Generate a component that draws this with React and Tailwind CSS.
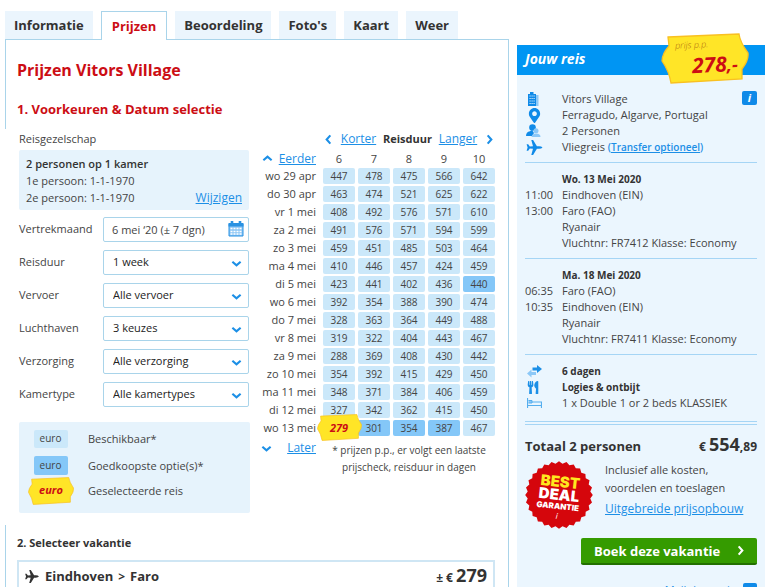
import { Fragment } from 'react';
import { FaMapMarkerAlt, FaUtensils } from 'react-icons/fa';

const TABS = ['Informatie', 'Prijzen', 'Beoordeling', "Foto's", 'Kaart', 'Weer'];

const DURATIONS = [6, 7, 8, 9, 10];

const PRICES = [
  ['wo 29 apr', [447, 478, 475, 566, 642]],
  ['do 30 apr', [463, 474, 521, 625, 622]],
  ['vr 1 mei', [408, 492, 576, 571, 610]],
  ['za 2 mei', [491, 576, 571, 594, 599]],
  ['zo 3 mei', [459, 451, 485, 503, 464]],
  ['ma 4 mei', [410, 446, 457, 424, 459]],
  ['di 5 mei', [423, 441, 402, 436, 440]],
  ['wo 6 mei', [392, 354, 388, 390, 474]],
  ['do 7 mei', [328, 363, 364, 449, 488]],
  ['vr 8 mei', [319, 322, 404, 443, 467]],
  ['za 9 mei', [288, 369, 408, 430, 442]],
  ['zo 10 mei', [354, 392, 415, 429, 450]],
  ['ma 11 mei', [348, 371, 384, 406, 459]],
  ['di 12 mei', [327, 342, 362, 415, 450]],
  ['wo 13 mei', [279, 301, 354, 387, 467]],
];

// cheapest option per duration, as "day-duration"
const CHEAPEST = ['di 5 mei-10', 'wo 13 mei-7', 'wo 13 mei-8', 'wo 13 mei-9'];
const SELECTED = 'wo 13 mei-6';

const FILTERS = [
  { id: 'duur', label: 'Reisduur', value: '1 week' },
  { id: 'vervoer', label: 'Vervoer', value: 'Alle vervoer' },
  { id: 'luchthaven', label: 'Luchthaven', value: '3 keuzes' },
  { id: 'verzorging', label: 'Verzorging', value: 'Alle verzorging' },
  { id: 'kamertype', label: 'Kamertype', value: 'Alle kamertypes' },
];

const FLIGHTS = [
  {
    date: 'Wo. 13 Mei 2020',
    stops: [['11:00', 'Eindhoven (EIN)'], ['13:00', 'Faro (FAO)']],
    nr: 'Vluchtnr: FR7412 Klasse: Economy',
  },
  {
    date: 'Ma. 18 Mei 2020',
    stops: [['06:35', 'Faro (FAO)'], ['10:35', 'Eindhoven (EIN)']],
    nr: 'Vluchtnr: FR7411 Klasse: Economy',
  },
];

function Chevron({ dir = 'down' }) {
  const paths = {
    down: 'M1.5 4 L6 8 L10.5 4',
    up: 'M1.5 8 L6 4 L10.5 8',
    left: 'M8 1.5 L4 6 L8 10.5',
    right: 'M4 1.5 L8 6 L4 10.5',
  };
  return (
    <svg viewBox="0 0 12 12" className="w-[11px] h-[11px]" fill="none" stroke="currentColor" strokeWidth="2.3">
      <path d={paths[dir]} />
    </svg>
  );
}

function TagShape() {
  return (
    <svg viewBox="0 0 88 51" preserveAspectRatio="none" className="absolute inset-0 w-full h-full">
      <path
        d="M7 4 L78 1 Q79 9 87 20 Q88 27 81 36 L81 46 L10 50 Q8 38 1 28 Q1 21 8 13 Z"
        fill="#ffe527"
        stroke="#f9c021"
        strokeWidth="1.3"
      />
    </svg>
  );
}

function CalendarIcon() {
  return (
    <svg viewBox="0 0 16 16" className="w-4 h-4">
      <path d="M1 3 H15 V15 H1 Z" fill="#8cc6f5" stroke="#2a92e2" />
      <path d="M0.5 2 H15.5 V5.5 H0.5 Z" fill="#2a92e2" />
      <path d="M4 0 V4 M12 0 V4" stroke="#2a92e2" strokeWidth="2.6" />
      <path d="M2.500 7.500 H13.500 M2.500 10.500 H13.500 M2.500 13 H13.500" stroke="#fff" strokeWidth="1.7" strokeDasharray="2 1" />
    </svg>
  );
}

function HotelIcon() {
  return (
    <svg viewBox="0 0 12 14" className="w-3 h-[14px]">
      <path d="M9 3 H11.500 V14 H9 Z" fill="#8cc8f7" />
      <path d="M1 2 H3 V0 H6.500 V2 H9 V14 H1 Z" fill="#0f8ae8" />
      <path d="M2.500 4 H8 M2.500 6.500 H8 M2.500 9 H8 M2.500 11.500 H8" stroke="#d5ecfd" strokeDasharray="1.200 0.800" />
    </svg>
  );
}

function PeopleIcon() {
  return (
    <svg viewBox="0 0 15 14" className="w-[15px] h-[14px]">
      <circle cx="6.5" cy="3.5" r="3.3" fill="#0f8ae8" />
      <path d="M0 12 Q0 8 4 7.300 L6 6 L8 9 L6 12 Z" fill="#0f8ae8" />
      <circle cx="10" cy="6.800" r="2.500" fill="#8cc8f7" />
      <path d="M5.500 13 Q6 9.500 10 9.500 Q14.500 9.500 14.500 13 Z" fill="#8cc8f7" />
    </svg>
  );
}

function ArrowsIcon() {
  return (
    <svg viewBox="0 0 15 13" className="w-[15px] h-[13px]">
      <path d="M0 8.500 L4.500 4.500 V7 H9 V10 H4.500 V12.500 Z" fill="#8cc8f7" />
      <path d="M15 4 L10 0 V2.500 H5.500 V5.500 H10 V8 Z" fill="#1c8fe6" />
    </svg>
  );
}

function BedIcon() {
  return (
    <svg viewBox="0 0 15 12" className="w-[15px] h-[12px]" fill="none" stroke="#55aeee">
      <path d="M0.500 1 V11 M0.500 8.500 H14.500 M14.500 11 V5 H4.500" strokeWidth="1.200" />
      <path d="M1.500 3.500 H5 V6 H1.500" fill="#8cc8f7" />
    </svg>
  );
}

function PlaneIcon({ className }) {
  return (
    <svg viewBox="0 0 16 15" className={className} fill="currentColor">
      <path d="M16 7.500 Q15 6.200 12.500 6.200 L10.400 6.200 L6.600 0 L4.800 0 L6.500 6.200 L3.300 6.400 L1.700 4.300 L0.100 4.300 L1.100 7.500 L0.100 10.700 L1.700 10.700 L3.300 8.600 L6.500 8.800 L4.800 15 L6.600 15 L10.400 8.800 L12.500 8.800 Q15 8.800 16 7.500 Z" />
    </svg>
  );
}

function DealBadge() {
  const points = Array.from({ length: 56 }, (_, i) => {
    const r = i % 2 ? 31.5 : 33.8;
    const a = (i / 56) * Math.PI * 2;
    return `${(34 + r * Math.cos(a)).toFixed(1)},${(34 + r * Math.sin(a)).toFixed(1)}`;
  }).join(' ');
  return (
    <div className="relative w-[68px] h-[68px] shrink-0">
      <svg viewBox="0 0 68 68" className="absolute inset-0">
        <polygon points={points} fill="#d5060c" />
      </svg>
      <div className="relative h-full pt-[14px] rotate-6 flex flex-col items-center text-white font-black font-['Inter',sans-serif]">
        <span className="text-[15px] leading-[13px] text-[#ffe81f]">BEST</span>
        <span className="text-[15px] leading-[13px]">DEAL</span>
        <span className="text-[8px] leading-[10px]">GARANTIE</span>
        <span className="text-[8px] leading-[10px] font-normal italic">i</span>
      </div>
    </div>
  );
}

function Tabs() {
  return (
    <nav className="flex gap-2 -mb-px relative">
      {TABS.map((tab) => (
        <a
          key={tab}
          href="#"
          className={
            tab === 'Prijzen'
              ? 'h-[29px] px-[10px] leading-[29px] text-[13px] font-bold text-[#cc0d14] bg-white border border-b-0 border-[#a9d4ea]'
              : 'h-[28px] px-[9px] leading-[28px] text-[13px] font-bold text-[#333] bg-[#ebf5fd]'
          }
        >
          {tab}
        </a>
      ))}
    </nav>
  );
}

function Preferences() {
  return (
    <div className="w-[230px] shrink-0 text-[11px]">
      <p className="leading-5">Reisgezelschap</p>
      <div className="mt-px h-[60px] px-[7px] pt-[5px] leading-[17px] rounded-xs bg-[#e6f3fc]">
        <p className="font-semibold text-[#333]">2 personen op 1 kamer</p>
        <p>1e persoon: 1-1-1970</p>
        <div className="flex justify-between">
          <p>2e persoon: 1-1-1970</p>
          <a href="#" className="text-[12px] text-[#1c8fe6] underline">Wijzigen</a>
        </div>
      </div>
      <form className="mt-[7px] flex flex-col gap-2">
        <div className="flex items-center justify-between h-[25px]">
          <label htmlFor="maand">Vertrekmaand</label>
          <div className="relative w-[146px]">
            <input
              id="maand"
              readOnly
              value="6 mei ‘20 (± 7 dgn)"
              className="w-full h-[25px] px-2 border border-[#a9d4ea] rounded-xs bg-white"
            />
            <span className="absolute right-[5px] top-1">
              <CalendarIcon />
            </span>
          </div>
        </div>
        {FILTERS.map((f) => (
          <div key={f.id} className="flex items-center justify-between h-[25px]">
            <label htmlFor={f.id}>{f.label}</label>
            <div className="relative w-[146px]">
              <select
                id={f.id}
                className="w-full h-[25px] px-[9px] border border-[#a9d4ea] rounded-xs bg-white appearance-none text-[#222]"
              >
                <option>{f.value}</option>
              </select>
              <span className="absolute right-[7px] top-2 text-[#1c8fe6] pointer-events-none">
                <Chevron />
              </span>
            </div>
          </div>
        ))}
      </form>
      <div className="mt-[15px] w-[231px] h-[91px] pt-2 pl-[9px] rounded-xs bg-[#e6f3fc] grid grid-cols-[45px_1fr] gap-x-[15px] items-center content-start">
        <span className="justify-self-center w-[34px] h-[18px] leading-[17px] text-[10px] text-center rounded-xs bg-[#cbe8fa]">
          euro
        </span>
        <span className="leading-[18px]">Beschikbaar*</span>
        <span className="mt-2 justify-self-center w-[34px] h-[19px] leading-[18px] text-[10px] text-center rounded-xs bg-[#84c7f8]">
          euro
        </span>
        <span className="mt-2 leading-[18px]">Goedkoopste optie(s)*</span>
        <span className="relative mt-[2px] w-[46px] h-[28px] leading-[25px] text-[11px] text-center font-bold italic text-[#cc0d14]">
          <TagShape />
          <span className="relative">euro</span>
        </span>
        <span className="mt-[2px]">Geselecteerde reis</span>
      </div>
    </div>
  );
}

function PriceCell({ day, duration, price }) {
  const key = `${day}-${duration}`;
  if (key === SELECTED) {
    return (
      <td className="p-0 h-4">
        <button className="relative block w-8 h-4 text-[11px] leading-4 font-bold italic text-[#cc0d14]">
          <span className="absolute -left-[6px] -top-[6px] w-[45px] h-[27px]">
            <TagShape />
          </span>
          <span className="relative">{price}</span>
        </button>
      </td>
    );
  }
  return (
    <td className="p-0 h-4">
      <button
        className={
          CHEAPEST.includes(key)
            ? 'block w-8 h-4 leading-[15px] text-[10px] rounded-xs bg-[#84c7f8]'
            : 'block w-8 h-4 leading-[15px] text-[10px] rounded-xs bg-[#cbe8fa]'
        }
      >
        {price}
      </button>
    </td>
  );
}

function PriceTable() {
  return (
    <div className="flex flex-col items-end text-[11px]">
      <div className="w-[172px] flex items-center justify-between leading-5">
        <a href="#" aria-label="Korter" className="text-[#1c8fe6]"><Chevron dir="left" /></a>
        <a href="#" className="text-[12px] text-[#1c8fe6] underline">Korter</a>
        <span className="font-bold text-[#333]">Reisduur</span>
        <a href="#" className="text-[12px] text-[#1c8fe6] underline">Langer</a>
        <a href="#" aria-label="Langer" className="text-[#1c8fe6]"><Chevron dir="right" /></a>
      </div>
      <table className="border-separate border-spacing-x-[3px] border-spacing-y-[2px] -mr-[3px]">
        <thead>
          <tr className="h-[15px] leading-[15px]">
            <th className="p-0 pr-1 font-normal text-[#1c8fe6]">
              <span className="flex items-center justify-between">
                <Chevron dir="up" />
                <a href="#" className="text-[12px] underline">Eerder</a>
              </span>
            </th>
            {DURATIONS.map((d) => (
              <th key={d} className="p-0 w-8 font-normal">{d}</th>
            ))}
          </tr>
        </thead>
        <tbody>
          {PRICES.map(([day, prices]) => (
            <tr key={day}>
              <th className="p-0 pr-1 h-4 leading-4 font-normal text-right whitespace-nowrap">{day}</th>
              {prices.map((price, i) => (
                <PriceCell key={i} day={day} duration={DURATIONS[i]} price={price} />
              ))}
            </tr>
          ))}
        </tbody>
      </table>
      <div className="flex justify-between w-[234px]">
        <div className="w-[55px] h-5 flex items-center justify-between text-[#1c8fe6]">
          <Chevron />
          <a href="#" className="text-[12px] underline">Later</a>
        </div>
        <p className="w-[172px] pt-1 text-[10px] leading-[17px] text-center whitespace-nowrap">
          * prijzen p.p., er volgt een laatste
          <br />
          prijscheck, reisduur in dagen
        </p>
      </div>
    </div>
  );
}

function Sidebar() {
  return (
    <aside className="w-[248px] shrink-0 mt-[34px] bg-[#ebf6fe] text-[11px] leading-4">
      <header className="relative h-[30px] pl-2 bg-[#0095f3]">
        <h2 className="text-[14px] leading-[28px] font-bold italic text-white">Jouw reis</h2>
        <div className="absolute right-4 -top-[12px] w-[88px] h-[51px]">
          <TagShape />
          <p className="absolute left-[14px] top-1 text-[9px] font-light italic text-[#b06a10] -rotate-3">prijs p.p.</p>
          <p className="absolute right-[11px] top-[17px] text-[21px] leading-7 font-bold italic text-[#cc0d14] -rotate-3">
            278<span className="text-[18px]">,-</span>
          </p>
        </div>
      </header>
      <div className="px-2 pt-4">
        <div className="relative grid grid-cols-[37px_1fr] items-center pb-[7px] border-b border-[#a5d5f5]">
          <span className="text-[#0f8ae8] pl-[2px]"><HotelIcon /></span>
          <span>Vitors Village</span>
          <span className="text-[#0f8ae8] pl-[2px]"><FaMapMarkerAlt className="w-[15px] h-[15px]" /></span>
          <span>Ferragudo, Algarve, Portugal</span>
          <span className="pl-px"><PeopleIcon /></span>
          <span>2 Personen</span>
          <span className="text-[#0f8ae8] pl-px"><PlaneIcon className="w-[17px] h-[15px]" /></span>
          <span>
            Vliegreis <a href="#" className="text-[10px] font-semibold text-[#1c8fe6]">(<span className="underline">Transfer optioneel</span>)</a>
          </span>
          <button
            aria-label="Info"
            className="absolute right-0 top-0 w-[15px] h-[14px] rounded-xs bg-[#0f8ae8] text-white text-[11px] leading-[14px] font-bold italic"
          >
            i
          </button>
        </div>
        {FLIGHTS.map((f) => (
          <div key={f.date} className="grid grid-cols-[37px_1fr] pt-2 pb-[7px] border-b border-[#a5d5f5]">
            <p className="col-start-2 text-[10px] font-bold text-[#333]">{f.date}</p>
            {f.stops.map(([time, place]) => (
              <Fragment key={time}>
                <span>{time}</span>
                <span>{place}</span>
              </Fragment>
            ))}
            <p className="col-start-2">Ryanair</p>
            <p className="col-start-2 whitespace-nowrap">{f.nr}</p>
          </div>
        ))}
        <div className="grid grid-cols-[37px_1fr] items-center pt-2 pb-[10px] border-b border-[#a5d5f5]">
          <span className="pl-[2px]"><ArrowsIcon /></span>
          <span className="text-[10px] font-bold text-[#333]">6 dagen</span>
          <span className="pl-[2px] text-[#1c8fe6]"><FaUtensils className="w-3 h-[13px]" /></span>
          <span className="text-[10px] font-bold text-[#333]">Logies &amp; ontbijt</span>
          <span className="pl-[2px]"><BedIcon /></span>
          <span>1 x Double 1 or 2 beds KLASSIEK</span>
        </div>
        <div className="mt-[2px] pt-[7px] border-t border-[#a5d5f5] flex items-baseline justify-between font-bold text-[#333]">
          <span className="text-[13px]">Totaal 2 personen</span>
          <span className="text-[12px]">
            € <span className="text-[18px] leading-6">554</span>,89
          </span>
        </div>
        <div className="mt-[5px] flex gap-3">
          <DealBadge />
          <div className="leading-[18px]">
            <p>Inclusief alle kosten,</p>
            <p>voordelen en toeslagen</p>
            <a href="#" className="block mt-[3px] text-[12px] text-[#1c8fe6] underline">Uitgebreide prijsopbouw</a>
          </div>
        </div>
        <button className="mt-[9px] ml-auto w-[176px] h-[27px] pl-[13px] pr-[11px] flex items-center justify-between rounded-xs bg-[#359b00] border-b-2 border-[#237000] text-white text-[13px] font-bold">
          Boek deze vakantie
          <Chevron dir="right" />
        </button>
        <div className="mt-[17px] flex items-center justify-end gap-2">
          <a href="#" className="text-[#1c8fe6] underline">Mail deze reis</a>
          <span className="w-[14px] h-[14px] rounded-xs bg-[#0f8ae8]" />
        </div>
      </div>
    </aside>
  );
}

export default function App() {
  return (
    <div className="h-screen overflow-hidden bg-white pt-[11px] pl-[5px] pr-[6px] flex gap-2 items-start text-[#444] font-['Open_Sans',sans-serif]">
      <main className="flex-1 min-w-0">
        <Tabs />
        <div className="border-t border-r border-[#a9d4ea]">
          <div className="h-[89px] pl-[11px] border-l border-[#a9d4ea] text-[#cc0d14] font-bold">
            <h1 className="pt-[18px] text-[16px] leading-6">Prijzen Vitors Village</h1>
            <h2 className="pt-[17px] text-[13px] leading-5">1. Voorkeuren &amp; Datum selectie</h2>
          </div>
          <div className="pl-[14px] pr-[13px] flex justify-between h-[396px]">
            <Preferences />
            <PriceTable />
          </div>
          <div className="pl-[11px] pr-[13px] border-l border-[#a9d4ea] text-[#333] font-bold">
            <h2 className="pt-2 text-[11px] leading-5">2. Selecteer vakantie</h2>
            <div className="mt-[7px] h-[60px] px-[6px] border-2 border-[#cfe6f4] flex items-start justify-between">
              <p className="flex items-center leading-[29px] text-[13px]">
                <PlaneIcon className="w-[14px] h-[13px] mr-[6px]" />
                Eindhoven <span className="mx-[5px] text-[12px]">&gt;</span> Faro
              </p>
              <p className="text-[12px] leading-[26px]">
                ± € <span className="text-[18px]">279</span>
              </p>
            </div>
          </div>
        </div>
      </main>
      <Sidebar />
    </div>
  );
}
